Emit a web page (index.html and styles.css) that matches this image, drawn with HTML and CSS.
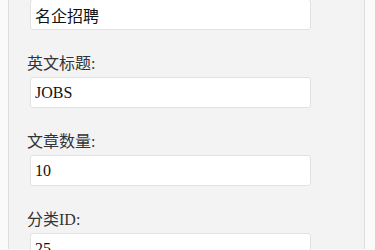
FILE: index.html
```html
<!DOCTYPE html>
<html lang="zh-CN">
<head>
  <meta charset="UTF-8">
  <title>模块设置</title>
  <link rel="stylesheet" href="styles.css">
</head>
<body>

  <div class="panel">
    <div class="field">
      <input type="text" class="text-input" value="名企招聘">
    </div>
    <div class="field">
      <label>英文标题:</label>
      <input type="text" class="text-input" value="JOBS">
    </div>
    <div class="field">
      <label>文章数量:</label>
      <input type="text" class="text-input" value="10">
    </div>
    <div class="field">
      <label>分类ID:</label>
      <input type="text" class="text-input" value="25">
    </div>
  </div>

</body>
</html>
```

FILE: styles.css
```css
html, body {
  height: 100%;
}

body {
  margin: 0;
  background: #fafafa;
  font-family: "Liberation Serif", "Noto Sans CJK SC", serif;
  overflow: hidden;
}

.panel {
  box-sizing: border-box;
  height: 100%;
  margin: 0 10px 0 8px;
  padding: 0 0 0 18px;
  background: #f3f3f3;
  border-left: 1px solid #dedede;
  border-right: 1px solid #dedede;
}

.field {
  margin-bottom: 24px;
}

.field:first-child {
  margin-top: -1px;
}

.field label {
  display: block;
  font-size: 16px;
  line-height: 20px;
  margin-bottom: 3px;
  color: #333;
}

.text-input {
  display: block;
  box-sizing: border-box;
  width: 281px;
  height: 31px;
  margin-left: 3px;
  padding: 0 4px;
  border: 1px solid #e2e2e2;
  border-radius: 3px;
  background: #fff;
  font-family: "Liberation Serif", "Noto Sans CJK SC", serif;
  font-size: 16px;
  color: #111;
  outline: none;
}
```
